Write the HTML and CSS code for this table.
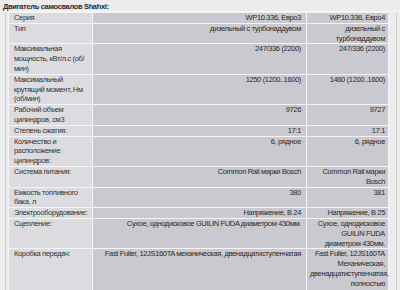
FILE: index.html
```html
<!DOCTYPE html>
<html>
<head>
<meta charset="utf-8">
<link rel="stylesheet" href="styles.css">
</head>
<body>
<div class="title">Двигатель самосвалов Shahxi:</div>
<div class="frame">
<table class="spec">
<colgroup><col class="c-label"><col class="c-v1"><col class="c-v2"></colgroup>
<tr><td class="lbl">Серия</td><td class="one">WP10.336, Евро3</td><td class="two">WP10.336, Евро4</td></tr>
<tr><td class="lbl">Тип</td><td class="one">дизельный с турбонаддувом</td><td class="two">дизельный с турбонаддувом</td></tr>
<tr><td class="lbl">Максимальная мощность, кВт/л.с (об/<wbr>мин)</td><td class="one">247/336 (2200)</td><td class="two">247/336 (2200)</td></tr>
<tr><td class="lbl">Максимальный крутящий момент, Нм (об/мин)</td><td class="one">1250 (1200..1600)</td><td class="two">1460 (1200..1600)</td></tr>
<tr><td class="lbl">Рабочий объем цилиндров, см3</td><td class="one">9726</td><td class="two">9727</td></tr>
<tr><td class="lbl">Степень сжатия:</td><td class="one">17:1</td><td class="two">17:1</td></tr>
<tr><td class="lbl">Количество и расположение цилиндров:</td><td class="one">6, рядное</td><td class="two">6, рядное</td></tr>
<tr><td class="lbl">Система питания:</td><td class="one">Common Rail марки Bosch</td><td class="two">Common Rail марки Bosch</td></tr>
<tr><td class="lbl">Емкость топливного бака, л</td><td class="one">380</td><td class="two">381</td></tr>
<tr><td class="lbl">Электрооборудование:</td><td class="one">Напряжение, В 24</td><td class="two">Напряжение, В 25</td></tr>
<tr><td class="lbl">Сцепление:</td><td class="one">Сухое, однодисковое GUILIN FUDA диаметром 430мм.</td><td class="two">Сухое, однодисковое GUILIN FUDA диаметром 430мм.</td></tr>
<tr><td class="lbl">Коробка передач:</td><td class="one">Fast Fuller, 12JS160TA механическая, двенадцатиступенчатая</td><td class="two">Fast Fuller, 12JS160TA Механическая, двенадцатиступенчатая, полностью синхронизированная</td></tr>
</table>
</div>
</body>
</html>
```
FILE: styles.css
```css
html, body {
  margin: 0;
  padding: 0;
  background: #ececec;
  font-family: "Liberation Sans", Arial, sans-serif;
  font-size: 7.5px;
  letter-spacing: -0.35px;
  line-height: 9.8px;
  color: #2a2a2a;
}
.title {
  font-weight: bold;
  padding: 2px 0 0 3px;
  height: 9px;
  border-bottom: 1px solid #f6f6f6;
}
.frame {
  margin-left: 5px;
  width: 388px;
  border-left: 1px solid #d0d0d0;
  border-right: 1px solid #d0d0d0;
  padding-left: 2px;
}
.spec {
  border-collapse: collapse;
  width: 381px;
  table-layout: fixed;
}
.c-label { width: 84px; }
.c-v1 { width: 214px; }
.c-v2 { width: 82px; }
.spec td {
  border: 1px solid #f4f4f6;
  background: #c9c9cf;
  vertical-align: top;
  text-align: right;
  padding: 0 5px 0 5px;
}
.spec td.one {
  white-space: nowrap;
}
.spec td.two {
  padding: 0 3px 0 3px;
}
.spec td.lbl {
  background: #dcdce0;
  text-align: left;
  color: #333;
}
```
